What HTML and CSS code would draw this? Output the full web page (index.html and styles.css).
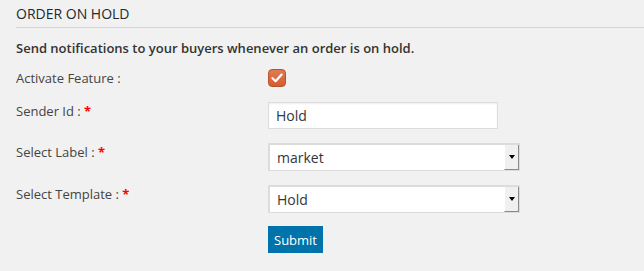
FILE: index.html
```html
<!DOCTYPE html>
<html lang="en">
<head>
    <meta charset="UTF-8">
    <title>Order On Hold</title>
    <link rel="stylesheet" href="styles.css">
</head>
<body>
    <div class="wrap">
        <h2 class="section-title">ORDER ON HOLD</h2>
        <p class="desc">Send notifications to your buyers whenever an order is on hold.</p>
        <form class="settings">
            <div class="row">
                <label class="label">Activate Feature :</label>
                <span class="check">
                    <svg width="12" height="10" viewBox="0 0 12 10"><path d="M1.5 5.2 L4.6 8.2 L10.6 1.6" fill="none" stroke="#fff" stroke-width="2.2" stroke-linecap="round" stroke-linejoin="round"/></svg>
                </span>
            </div>
            <div class="row">
                <label class="label">Sender Id : <span class="req">*</span></label>
                <input class="text-input" type="text" value="Hold">
            </div>
            <div class="row">
                <label class="label">Select Label : <span class="req">*</span></label>
                <div class="select-box">
                    <span class="select-value">market</span>
                    <span class="select-arrow"></span>
                </div>
            </div>
            <div class="row">
                <label class="label">Select Template : <span class="req">*</span></label>
                <div class="select-box">
                    <span class="select-value">Hold</span>
                    <span class="select-arrow"></span>
                </div>
            </div>
            <div class="row submit-row">
                <span class="label"></span>
                <button type="button" class="btn-submit">Submit</button>
            </div>
        </form>
    </div>
</body>
</html>
```

FILE: styles.css
```css
body {
    margin: 0;
    background: #f1f1f1;
    font-family: "Open Sans", "Noto Sans", sans-serif;
    font-size: 13px;
    color: #444;
}
.wrap {
    padding-left: 16px;
}
.section-title {
    margin: 0;
    padding: 4px 0 3px;
    font-size: 14px;
    font-weight: normal;
    line-height: 20px;
    color: #23282d;
    border-bottom: 1px solid #d4d4d4;
}
.desc {
    margin: 10px 0 10px;
    font-weight: 600;
    line-height: 20px;
    color: #333;
}
.row {
    display: flex;
    align-items: flex-start;
    margin-bottom: 13px;
}
.label {
    width: 252px;
    flex-shrink: 0;
    line-height: 20px;
}
.req {
    color: #f00;
    font-weight: bold;
}
.check {
    margin-top: 1px;
    width: 18px;
    height: 18px;
    box-sizing: border-box;
    border: 1px solid #b9532c;
    border-radius: 4px;
    background: linear-gradient(#e27a50, #d35e30);
    display: flex;
    align-items: center;
    justify-content: center;
}
.text-input {
    margin: 1px 0 0;
    width: 230px;
    height: 27px;
    box-sizing: border-box;
    border: 1px solid #ddd;
    box-shadow: inset 0 1px 2px rgba(0, 0, 0, 0.07);
    background: #fff;
    padding: 0 7px;
    font-family: inherit;
    font-size: 14px;
    color: #32373c;
    outline: none;
}
.select-box {
    margin-top: 1px;
    position: relative;
    width: 252px;
    height: 28px;
    box-sizing: border-box;
    border: 2px solid #dcdcdc;
    border-bottom-width: 1px;
    border-right-width: 1px;
    background: #fff;
    display: flex;
    align-items: center;
    padding-left: 7px;
    font-size: 14px;
    color: #32373c;
}
.select-arrow {
    position: absolute;
    top: 0;
    right: 0;
    bottom: 0;
    width: 15px;
    box-sizing: border-box;
    background: #f0f0f0;
    border-left: 1px solid #fff;
    border-right: 1px solid #8a8a8a;
    border-bottom: 1px solid #8a8a8a;
    display: flex;
    align-items: center;
    justify-content: center;
}
.select-arrow::after {
    content: "";
    border-left: 3px solid transparent;
    border-right: 3px solid transparent;
    border-top: 4px solid #000;
}
.submit-row {
    margin-top: 2px;
}
.btn-submit {
    height: 27px;
    padding: 0 6px;
    border: none;
    background: #0073aa;
    color: #fff;
    font-family: inherit;
    font-size: 13px;
    cursor: pointer;
}
```
